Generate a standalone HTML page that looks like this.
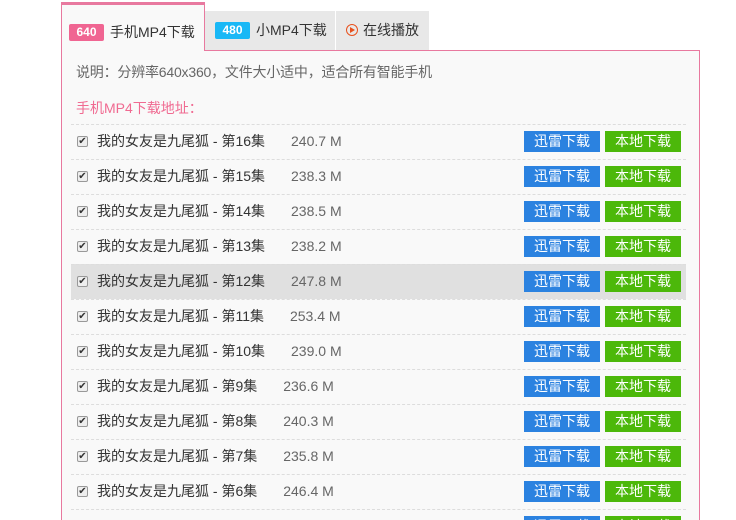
<!DOCTYPE html>
<html><head><meta charset="utf-8"><style>
*{margin:0;padding:0;box-sizing:border-box}
html,body{width:736px;height:520px;overflow:hidden}
body{background:#fff;font-family:"Liberation Sans","Noto Sans CJK SC",sans-serif;font-size:13px;color:#333;position:relative}
.tab{position:absolute;height:39px;top:11px;background:#e8e8e8;border-right:1px solid #fff;font-size:14px;color:#333;line-height:39px}
.t1{left:61px;top:2px;height:49px;width:144px;background:#f9f9f9;border:1px solid #e8799f;border-top:3px solid #e8799f;border-bottom:none;z-index:2;line-height:54px;padding-left:7px}
.badge{display:inline-block;width:35px;height:17px;line-height:17px;border-radius:2px;color:#fff;font-size:12px;font-weight:bold;text-align:center;vertical-align:middle;margin-right:6px;position:relative;top:-1px}
.box{position:absolute;left:61px;top:50px;width:639px;height:470px;border:1px solid #e8799f;border-bottom:none;background:#f9f9f9;overflow:hidden}
.desc{position:absolute;left:14px;top:11px;color:#666;font-size:14px;letter-spacing:-0.2px}
.h{position:absolute;left:14px;top:47px;color:#f06a91;font-size:14px}
.row{position:absolute;left:9px;width:615px;height:35px;border-top:1px dashed #ddd;line-height:33px}
.row.hl{background:#e0e0e0}
.cb{position:absolute;left:6px;top:11px;width:11px;height:11px;border:1px solid #999;border-radius:2px;background:#eee;font-size:10px;line-height:9px;text-align:center;color:#333}
.nm{position:absolute;left:26px;color:#333;font-size:14px}
.sz{color:#666;margin-left:26px}
.b{position:absolute;top:6px;width:76px;height:21px;line-height:21px;color:#fff;text-align:center;font-size:14px}
.x{left:453px;background:#2b82e0}.l{left:534px;background:#4cb80a}
</style></head><body>
<div class="tab t1"><span class="badge" style="background:#f06592">640</span>手机MP4下载</div>
<div class="tab" style="left:205px;width:131px;padding-left:10px"><span class="badge" style="background:#19b8f6">480</span>小MP4下载</div>
<div class="tab" style="left:336px;width:94px;padding-left:10px"><span style="display:inline-block;width:12px;height:12px;border:1.5px solid #e8511d;border-radius:50%;vertical-align:middle;position:relative;top:-1px;margin-right:5px"><span style="position:absolute;left:3px;top:2px;border-left:5px solid #e8511d;border-top:3px solid transparent;border-bottom:3px solid transparent"></span></span>在线播放</div>
<div class="box">
<div class="desc">说明：分辨率640x360，文件大小适中，适合所有智能手机</div>
<div class="h">手机MP4下载地址：</div>
<div class="row" style="top:73px"><span class="cb">✔</span><span class="nm">我的女友是九尾狐 - 第16集<span class="sz">240.7 M</span></span><span class="b x">迅雷下载</span><span class="b l">本地下载</span></div>
<div class="row" style="top:108px"><span class="cb">✔</span><span class="nm">我的女友是九尾狐 - 第15集<span class="sz">238.3 M</span></span><span class="b x">迅雷下载</span><span class="b l">本地下载</span></div>
<div class="row" style="top:143px"><span class="cb">✔</span><span class="nm">我的女友是九尾狐 - 第14集<span class="sz">238.5 M</span></span><span class="b x">迅雷下载</span><span class="b l">本地下载</span></div>
<div class="row" style="top:178px"><span class="cb">✔</span><span class="nm">我的女友是九尾狐 - 第13集<span class="sz">238.2 M</span></span><span class="b x">迅雷下载</span><span class="b l">本地下载</span></div>
<div class="row hl" style="top:213px"><span class="cb">✔</span><span class="nm">我的女友是九尾狐 - 第12集<span class="sz">247.8 M</span></span><span class="b x">迅雷下载</span><span class="b l">本地下载</span></div>
<div class="row" style="top:248px"><span class="cb">✔</span><span class="nm">我的女友是九尾狐 - 第11集<span class="sz">253.4 M</span></span><span class="b x">迅雷下载</span><span class="b l">本地下载</span></div>
<div class="row" style="top:283px"><span class="cb">✔</span><span class="nm">我的女友是九尾狐 - 第10集<span class="sz">239.0 M</span></span><span class="b x">迅雷下载</span><span class="b l">本地下载</span></div>
<div class="row" style="top:318px"><span class="cb">✔</span><span class="nm">我的女友是九尾狐 - 第9集<span class="sz">236.6 M</span></span><span class="b x">迅雷下载</span><span class="b l">本地下载</span></div>
<div class="row" style="top:353px"><span class="cb">✔</span><span class="nm">我的女友是九尾狐 - 第8集<span class="sz">240.3 M</span></span><span class="b x">迅雷下载</span><span class="b l">本地下载</span></div>
<div class="row" style="top:388px"><span class="cb">✔</span><span class="nm">我的女友是九尾狐 - 第7集<span class="sz">235.8 M</span></span><span class="b x">迅雷下载</span><span class="b l">本地下载</span></div>
<div class="row" style="top:423px"><span class="cb">✔</span><span class="nm">我的女友是九尾狐 - 第6集<span class="sz">246.4 M</span></span><span class="b x">迅雷下载</span><span class="b l">本地下载</span></div>
<div class="row" style="top:458px"><span class="cb">✔</span><span class="b x">迅雷下载</span><span class="b l">本地下载</span></div>
</div>
</body></html>
